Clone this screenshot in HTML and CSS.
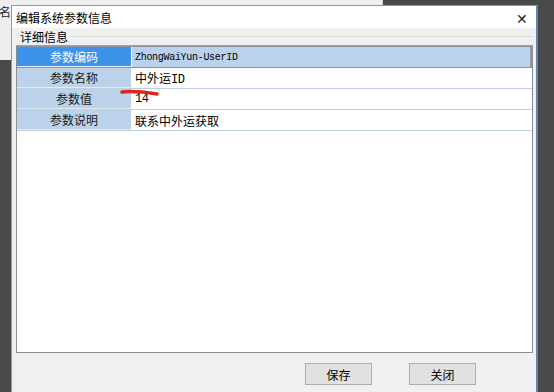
FILE: index.html
```html
<!DOCTYPE html>
<html lang="zh-CN">
<head>
  <meta charset="UTF-8" />
  <title>编辑系统参数信息</title>
  <link rel="stylesheet" href="styles.css">
</head>
<body>
  <div class="desktop">
    <div class="behind">
      <span class="behind-text">名</span>
    </div>

    <div class="dialog">
      <div class="titlebar">
        <span class="title">编辑系统参数信息</span>
        <span class="close">✕</span>
      </div>
      <div class="dialog-body">
        <div class="group-label">
          <span>详细信息</span>
          <span class="group-line"></span>
        </div>
        <div class="grid">
          <div class="row selected">
            <div class="label">参数编码</div>
            <div class="value"><span class="mono">ZhongWaiYun-UserID</span></div>
          </div>
          <div class="row">
            <div class="label">参数名称</div>
            <div class="value"><span>中外运<span class="mono-lg">ID</span></span></div>
          </div>
          <div class="row">
            <div class="label">参数值</div>
            <div class="value"><span class="mono-lg">14</span></div>
          </div>
          <div class="row">
            <div class="label">参数说明</div>
            <div class="value"><span>联系中外运获取</span></div>
          </div>
        </div>
        <div class="buttons">
          <button class="btn">保存</button>
          <button class="btn">关闭</button>
        </div>
      </div>
      <svg class="marker" width="40" height="8" viewBox="0 0 40 8">
        <path d="M2 3 C10 2, 24 3, 37 5" stroke="#e0231c" stroke-width="3.5" fill="none" stroke-linecap="round"/>
      </svg>
    </div>
  </div>
</body>
</html>
```

FILE: styles.css
```css
* {
  box-sizing: border-box;
}
body {
  margin: 0;
  background: #4a4a4a;
  font-family: "Noto Sans CJK SC", "Noto Sans", sans-serif;
  font-size: 12px;
  color: #000;
}
.desktop {
  position: relative;
  width: 554px;
  height: 392px;
  overflow: hidden;
}
.behind {
  position: absolute;
  left: 0;
  top: 0;
  width: 383px;
  height: 60px;
  background: #eeeeee;
  border-right: 1px solid #cfcfcf;
}
.behind-text {
  position: absolute;
  left: -1px;
  top: 5px;
  font-size: 12px;
  line-height: 14px;
  color: #222;
}
.dialog {
  position: absolute;
  left: 11px;
  top: 5px;
  width: 527px;
  height: 400px;
  background: #f0f0f0;
  border: 1px solid #7c9cc4;
  border-right: 2px solid #5f85b3;
}
.titlebar {
  height: 22px;
  background: #ffffff;
  display: flex;
  align-items: center;
  justify-content: space-between;
  padding: 0 8px 0 4px;
}
.title {
  font-size: 12px;
  line-height: 14px;
  margin-top: 1px;
}
.close {
  font-size: 14px;
  color: #222;
  margin-top: 2px;
}
.dialog-body {
  padding: 0 3px 0 4px;
}
.group-label {
  display: flex;
  align-items: center;
  height: 17px;
  padding-left: 4px;
  font-size: 12px;
}
.group-line {
  flex: 1;
  height: 1px;
  margin-left: 3px;
  background: #dcdcdc;
}
.grid {
  height: 308px;
  background: #ffffff;
  border: 1px solid #8b8f96;
  border-top-color: #a0a0a0;
}
.row {
  display: flex;
  height: 21px;
  border-bottom: 1px solid #bfcfdf;
}
.label {
  width: 115px;
  background: #bcd2ea;
  border-right: 1px solid #ffffff;
  border-bottom: 1px solid #e2ebf5;
  display: flex;
  align-items: center;
  justify-content: center;
  color: #1a1a1a;
}
.value {
  flex: 1;
  display: flex;
  align-items: center;
  padding-left: 3px;
  background: #ffffff;
}
.row.selected {
  height: 22px;
  border-top: 1px solid #8d96a5;
  border-bottom: 1px solid #8d96a5;
}
.row.selected .label {
  background: #3d92ea;
  color: #ffffff;
}
.row.selected .value {
  background: #bad2ec;
  border-right: 2px solid #8d96a5;
}
.mono {
  font-family: "Liberation Mono", "DejaVu Sans Mono", monospace;
  font-size: 10px;
  letter-spacing: -0.3px;
}
.mono-lg {
  font-family: "Liberation Mono", "DejaVu Sans Mono", monospace;
  font-size: 12px;
  letter-spacing: -0.5px;
}
.buttons {
  display: flex;
  gap: 37px;
  padding: 10px 0 0 289px;
}
.btn {
  width: 67px;
  height: 22px;
  background: #e1e1e1;
  border: 1px solid #adadad;
  font-family: "Noto Sans CJK SC", sans-serif;
  font-size: 12px;
  padding: 0;
  color: #000;
}
.marker {
  position: absolute;
  left: 108px;
  top: 83px;
}
```
